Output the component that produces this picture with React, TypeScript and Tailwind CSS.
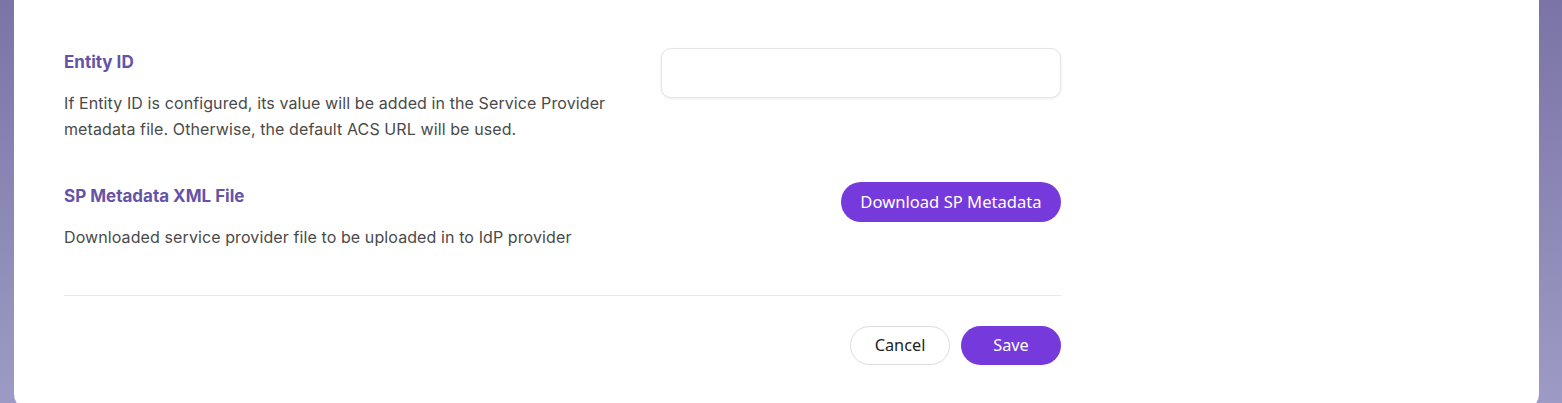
import React from 'react';

type Row = { title: string; desc: string[]; action: React.ReactNode };

const btnFont = { fontFamily: '"Noto Sans", "Open Sans", sans-serif' };

function SettingRow({ title, desc, action }: Row) {
  return (
    <div className="flex items-start justify-between">
      <div className="pt-[2px] w-[580px]">
        <h3 className="text-[17px] leading-[24px] font-bold text-[#6553a7]">{title}</h3>
        <p className="mt-4 text-[16px] leading-[26px] tracking-[0.1px] text-[#4a4a4a]">
          {desc.map((line, i) => (
            <span key={i} className="block">{line}</span>
          ))}
        </p>
      </div>
      {action}
    </div>
  );
}

export default function App() {
  return (
    <div
      className="h-[403px] w-full overflow-hidden bg-gradient-to-b from-[#7b74a6] to-[#9d9bc5]"
      style={{ fontFamily: 'Inter, "Noto Sans", sans-serif' }}
    >
      <div className="ml-[14px] w-[1525px] h-[410px] bg-white rounded-b-2xl pl-[50px] pt-[48px]">
        <div className="w-[997px]">
          <SettingRow
            title="Entity ID"
            desc={[
              'If Entity ID is configured, its value will be added in the Service Provider',
              'metadata file. Otherwise, the default ACS URL will be used.',
            ]}
            action={
              <input
                className="w-[400px] h-[50px] rounded-[10px] border border-[#e4e4ea] bg-white shadow-[0_1px_3px_rgba(0,0,0,0.08)] outline-none px-4"
              />
            }
          />
          <div className="mt-10">
            <SettingRow
              title="SP Metadata XML File"
              desc={['Downloaded service provider file to be uploaded in to IdP provider']}
              action={
                <button
                  style={btnFont}
                  className="h-[40px] w-[220px] rounded-full bg-[#7539dc] text-white text-[16.6px]"
                >
                  Download SP Metadata
                </button>
              }
            />
          </div>
          <div className="mt-[45px] border-t border-[#e8e8ec]" />
          <div className="mt-[30px] flex justify-end gap-[11px]">
            <button
              style={btnFont}
              className="h-[39px] w-[100px] rounded-full border border-[#dcdcdc] bg-white text-[16.3px] text-[#222]"
            >
              Cancel
            </button>
            <button
              style={btnFont}
              className="h-[39px] w-[100px] rounded-full bg-[#7539dc] text-white text-[16.3px]"
            >
              Save
            </button>
          </div>
        </div>
      </div>
    </div>
  );
}
